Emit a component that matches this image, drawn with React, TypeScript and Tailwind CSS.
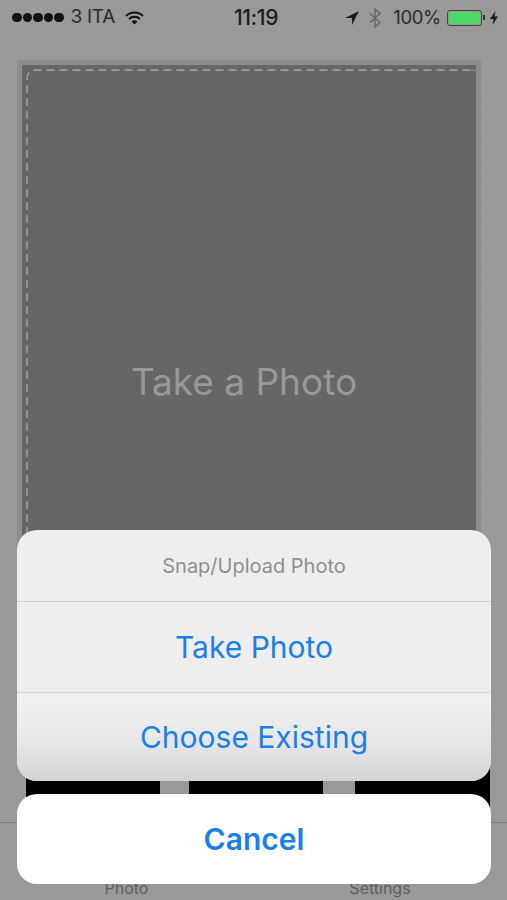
import React from 'react';

const font = { fontFamily: 'Inter, "Liberation Sans", sans-serif' };

const Dots = () => (
  <div className="flex gap-[1px]">
    {[0, 1, 2, 3, 4].map((i) => (
      <span key={i} className="w-[9.5px] h-[9.5px] rounded-full bg-[#111]" />
    ))}
  </div>
);

const Wifi = () => (
  <svg width="19" height="14" viewBox="0 0 19 14" fill="none" stroke="#111" strokeWidth="1.9">
    <path d="M1 5 A12 12 0 0 1 18 5" />
    <path d="M4 8 A8 8 0 0 1 15 8" />
    <path d="M9.5 13.5 L6.6 10.6 A4.2 4.2 0 0 1 12.4 10.6 Z" fill="#111" stroke="none" />
  </svg>
);

const StatusBar = () => (
  <div className="h-[60px] relative text-[19px] text-[#2b2b2b] tracking-[-0.3px]">
    <div className="h-[35px] pl-[12px] pr-[9px] flex items-center justify-between">
      <div className="flex items-center w-[140px]">
        <Dots />
        <span className="ml-[7px] whitespace-nowrap">3 ITA</span>
        <span className="ml-[10px]"><Wifi /></span>
      </div>
      <span className="font-medium text-[#1c1c1c] text-[21px] ml-[15px]">11:19</span>
      <div className="flex items-center">
        <svg width="14" height="14" viewBox="0 0 14 14" className="mr-[9px]">
          <path d="M14 0 L0 7 L7 7 L7 14 Z" fill="#1c1c1c" />
        </svg>
        <svg width="14" height="20" viewBox="0 0 14 20" fill="none" stroke="#666" strokeWidth="1.4" className="mr-[11px]">
          <path d="M2 5.5 L12 14.5 L7 19 L7 1 L12 5.5 L2 14.5" />
        </svg>
        <span className="text-[18.5px]">100%</span>
        <div className="ml-[6px] w-[35px] h-[16px] rounded-[3px] border border-[#444] p-[1px]">
          <div className="w-full h-full bg-[#4cd964] rounded-[2px]" />
        </div>
        <span className="w-[2px] h-[5px] bg-[#333] ml-[1px] mr-[5px]" />
        <svg width="8" height="14" viewBox="0 0 8 14">
          <path d="M5.5 0 L0 8 L3.5 8 L2.5 14 L8 5.5 L4.5 5.5 Z" fill="#1c1c1c" />
        </svg>
      </div>
    </div>
  </div>
);

const DashedFrame = () => (
  <svg width="455" height="700" viewBox="0 0 455 700" fill="none" className="absolute left-[4px] top-[4px]">
    <path d="M1 700 L1 10 Q1 1 10 1 L445 1" stroke="#a4a4a4" strokeWidth="1.4" strokeDasharray="8 5" />
    <path d="M445 1 Q454 1 454 10 L454 700" stroke="#8e8e8e" strokeWidth="1.2" strokeDasharray="8 5" />
  </svg>
);

const App: React.FC = () => {
  return (
    <div className="relative w-[507px] h-[900px] overflow-hidden bg-[#999999]" style={font}>
      <StatusBar />

      <div className="ml-[17px] w-[464px] h-[700px] border-[5px] border-b-0 border-[#8c8c8c] bg-[#666666] relative">
        <DashedFrame />
        <div className="h-[634px] flex items-center justify-center pr-[10px] text-[37px] text-[#999999]">
          Take a Photo
        </div>
      </div>

      <div className="ml-[26px] w-[464px] h-[62px] flex">
        <div className="w-[134px] bg-black" />
        <div className="w-[29px]" />
        <div className="w-[134px] bg-black" />
        <div className="w-[32px]" />
        <div className="w-[135px] bg-black" />
      </div>

      <div className="border-t border-[#808080] h-[78px] flex items-end text-[16px] text-[#5f5f5f]">
        <div className="w-[253px] text-center">Photo</div>
        <div className="w-[254px] text-center">Settings</div>
      </div>

      <div className="absolute left-[17px] top-[530px] w-[474px]">
        <div className="rounded-[20px] overflow-hidden bg-[#eeeeee]">
          <div className="h-[71px] flex items-center justify-center text-[20px] text-[#8f8f8f]">
            Snap/Upload Photo
          </div>
          <div className="h-[91px] border-t border-[#cfcfcf] flex items-center justify-center text-[30px] text-[#1a7fe8]">
            Take Photo
          </div>
          <div className="h-[89px] border-t border-[#d2d2d2] flex items-center justify-center text-[30px] text-[#1a7fe8] bg-gradient-to-b from-[#efefef] from-15% via-[#e6e6e6] via-60% to-[#d3d3d3]">
            Choose Existing
          </div>
        </div>
        <div className="mt-[13px] h-[90px] rounded-[20px] bg-white flex items-center justify-center text-[30px] font-semibold text-[#1a7fe8]">
          Cancel
        </div>
      </div>
    </div>
  );
};

export default App;
